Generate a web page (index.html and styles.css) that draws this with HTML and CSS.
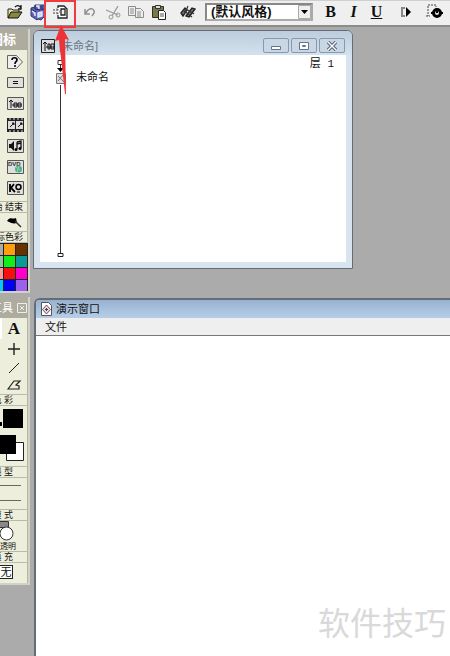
FILE: index.html
```html
<!DOCTYPE html>
<html lang="zh-CN">
<head>
<meta charset="utf-8">
<title>未命名</title>
<link rel="stylesheet" href="styles.css">
</head>
<body>
<header class="toolbar">
  <div class="tools">
    <button class="tool" aria-label="打开"><svg width="18" height="16" viewBox="0 0 18 16"><path d="M2 14V5h4l1 1h6v3" fill="#e8e5a0" stroke="#222"/><path d="M2 14l3-6h11l-4 6z" fill="#8a8640" stroke="#111"/><path d="M9 3c2-2 4-2 6 1M15 1v4h-3" fill="none" stroke="#111" stroke-width="1.3"/></svg></button>
    <button class="tool" aria-label="全部保存"><svg width="18" height="18" viewBox="0 0 18 18"><path d="M2 5l4-1V2h9l1 2v9l-4 4-3-1-1 1-6-4z" fill="#5b60b8" stroke="#333a70"/><path d="M6 2v4l5 1V3M2 6l5 3M13 3v4l3-2" stroke="#252b66" fill="none"/><path d="M7 3h3v3M3 8l3 2v3M9 10l4-1v4l-4 1z" stroke="#e4e8f5" stroke-width="1.4" fill="#c9cfee"/></svg></button>
    <button class="tool" aria-label="导入"><svg width="16" height="16" viewBox="0 0 16 16"><path d="M5 4V2h6l3 3v9H5v-3" fill="#fff" stroke="#222" stroke-width="1.3"/><path d="M8 5h4v6H8z" fill="#eee" stroke="#222" stroke-width="1.3"/><path d="M0 6h5M0 9h5M4 4.500l3 3-3 3" fill="none" stroke="#444" stroke-dasharray="2 1"/></svg></button>
  </div>
  <div class="tools">
    <button class="tool" aria-label="撤消"><svg width="16" height="16" viewBox="0 0 16 16"><path d="M3 5v5h5M3 10l3-4c4-3 7 0 6 3l-2 3" fill="none" stroke="#909090" stroke-width="1.5"/></svg></button>
    <button class="tool" aria-label="剪切"><svg width="16" height="16" viewBox="0 0 16 16"><path d="M1 6l12 5M13 2L7 12" fill="none" stroke="#999" stroke-width="1.3"/><circle cx="6" cy="13" r="2" fill="none" stroke="#999"/><circle cx="13" cy="11" r="2" fill="none" stroke="#999"/></svg></button>
    <button class="tool" aria-label="复制"><svg width="18" height="16" viewBox="0 0 18 16"><path d="M1.500 2.500h7v9h-7zM8.500 4.500h5l3 3v6h-8z" fill="#eee" stroke="#8c8c8c"/><path d="M3 5h4M3 7h4M3 9h4M10 8h4M10 10h4M10 12h4" stroke="#8c8c8c"/></svg></button>
    <button class="tool" aria-label="粘贴"><svg width="16" height="16" viewBox="0 0 16 16"><path d="M1.500 2.500h11v11h-11z" fill="#77784c" stroke="#34351f"/><path d="M4.500 1.500h5v3h-5z" fill="#ddd" stroke="#333"/><path d="M7.500 6.500h5l2 2v7h-7z" fill="#fff" stroke="#222"/><path d="M9 10h4M9 12h4" stroke="#555"/></svg></button>
  </div>
  <button class="tool" aria-label="查找"><svg width="18" height="16" viewBox="0 0 18 16"><path d="M2 9l4-5 2 2-4 6zM7 12l6-8 3 1-6 8z" fill="#777" stroke="#222" stroke-width="1.4"/><path d="M4 6l9 7M7 5l8 5M9 2l-2 5" stroke="#333" stroke-width="1.2"/></svg></button>
  <div class="style-picker">
    <select aria-label="文本风格"><option>(默认风格)</option></select>
    <svg class="picker-arrow" width="13" height="14" viewBox="0 0 13 14"><path d="M.5.5h12v13H.5z" fill="#efefef" stroke="#aaa"/><path d="M3 5h7l-3.500 4z" fill="#000"/></svg>
  </div>
  <div class="tools">
    <button class="tool letter bold">B</button>
    <button class="tool letter italic">I</button>
    <button class="tool letter underline">U</button>
  </div>
  <button class="tool" aria-label="控制面板"><svg width="14" height="14" viewBox="0 0 14 14"><path d="M6 3H3v8h3" fill="none" stroke="#888" stroke-width="2"/><path d="M7 2l5 5-5 5z" fill="#000"/></svg></button>
  <button class="tool" aria-label="函数"><svg width="18" height="18" viewBox="0 0 18 18"><path d="M2 2h8v2M2 3v10M0 13h4" fill="none" stroke="#444" stroke-dasharray="2 1"/><circle cx="11" cy="10" r="3.500" fill="#ddd" stroke="#000" stroke-width="3"/><path d="M11 7v3M5 10h2M15 10h2" stroke="#000" stroke-width="2"/></svg></button>
</header>

<div class="workspace">
  <aside class="palettes">
    <section class="palette">
      <h2 class="palette-title">图标</h2>
      <div class="icon-list">
        <button class="icon" aria-label="判断"><svg width="18" height="18" viewBox="0 0 18 18"><path d="M1.500 2.500h9l6 6.500-6 6.500h-9z" fill="#eee" stroke="#666"/><path d="M6 7c0-3 5-3 5 0 0 2-2 1-2 4M8 13h2" fill="none" stroke="#000" stroke-width="1.6"/></svg></button>
        <button class="icon" aria-label="计算"><svg width="17" height="12" viewBox="0 0 17 12"><path class="key" d="M.5.5h16v10H.5z"/><path d="M6 4.500h5M6 6.500h5" stroke="#111"/></svg></button>
        <button class="icon" aria-label="群组"><svg width="17" height="14" viewBox="0 0 17 14"><path class="key" d="M.5.5h16v12H.5z"/><path d="M4 11V3M2 5l2-2 2 2M5 8h10M7 6h3v4H7zM11 6h3v4h-3z" fill="none" stroke="#111"/></svg></button>
        <button class="icon" aria-label="电影"><svg width="17" height="14" viewBox="0 0 17 14"><path d="M0 0h17v14H0z" fill="#222"/><path d="M1 3h7v8H1zM9 3h7v8H9z" fill="#ddd"/><path d="M2 1h14M2 13h14" stroke="#ddd" stroke-dasharray="2 2"/><path d="M3 9l3-3M11 9l3-3M5 5h2v2M13 5h2v2" stroke="#111"/></svg></button>
        <button class="icon" aria-label="声音"><svg width="17" height="14" viewBox="0 0 17 14"><path class="key" d="M.5.5h16v13H.5z"/><path d="M2 5h2l3-3v10L4 9H2z" fill="#111"/><path d="M10 3v7M10 3l4-1v7M10 5l4-1" fill="none" stroke="#111" stroke-width="1.3"/><circle cx="9" cy="10.500" r="1.500"/><circle cx="13" cy="9.500" r="1.500"/></svg></button>
        <button class="icon" aria-label="DVD"><svg width="17" height="14" viewBox="0 0 17 14"><path class="key" d="M.5.5h16v13H.5z"/><text x="1" y="6" class="micro">DVD</text><circle cx="11.500" cy="9" r="3.500" fill="#47afa5"/><path d="M9 7l4 3M12 6l-2 6" stroke="#a4d36b"/></svg></button>
        <button class="icon" aria-label="知识对象"><svg width="17" height="14" viewBox="0 0 17 14"><path class="key" d="M.5.5h16v13H.5z"/><path d="M3 3v8M7 3L4 7l4 4" fill="none" stroke="#000" stroke-width="1.8"/><circle cx="11.500" cy="6" r="2.500" fill="none" stroke="#000" stroke-width="1.5"/><path d="M10 11h3" stroke="#000"/></svg></button>
      </div>
      <h3 class="label">开始 结束</h3>
      <div class="flag"><svg width="17" height="12" viewBox="0 0 17 12"><path d="M1 5c4-5 5-1 9-3l1 5c-4 1-6 0-10-2z" fill="#000"/><path d="M9 5l6 6" stroke="#333" stroke-width="1.5"/></svg></div>
      <h3 class="label">图标色彩</h3>
      <div class="swatches">
        <i class="gray"></i><i class="orange"></i><i class="brown"></i>
        <i class="mint"></i><i class="green"></i><i class="teal"></i>
        <i class="pink"></i><i class="red"></i><i class="magenta"></i>
        <i class="cyan"></i><i class="blue"></i><i class="violet"></i>
      </div>
    </section>

    <section class="palette toolbox">
      <h2 class="palette-title">工具<button class="palette-close" aria-label="关闭工具"><svg width="10" height="10" viewBox="0 0 10 10"><path d="M.5.5h9v9h-9zM3 3l4 4M7 3L3 7" fill="none" stroke="#eee"/></svg></button></h2>
      <div class="drawing-tools">
        <button class="draw selected" aria-label="选择"></button><button class="draw text-tool">A</button>
        <button class="draw" aria-label="矩形"></button><button class="draw" aria-label="直线"><svg width="14" height="14" viewBox="0 0 14 14"><path d="M7 1v12M1 7h12" stroke="#222" stroke-width="1.4"/></svg></button>
        <button class="draw" aria-label="椭圆"><svg width="14" height="14" viewBox="0 0 14 14"><circle cx="7" cy="7" r="4.500" fill="none" stroke="#222"/></svg></button><button class="draw" aria-label="斜线"><svg width="14" height="14" viewBox="0 0 14 14"><path d="M2 12L12 2" stroke="#222"/></svg></button>
        <button class="draw" aria-label="圆角矩形"></button><button class="draw" aria-label="多边形"><svg width="16" height="14" viewBox="0 0 16 14"><path d="M2 11l6-8h6l-4 4 3 1v3z" fill="none" stroke="#222" stroke-width="1.2"/></svg></button>
      </div>
      <h3 class="label">色 彩</h3>
      <div class="ink"><svg width="28" height="60" viewBox="0 0 28 60"><path d="M0 20v-4h2v4z"/><path d="M3 3h20v19H3z"/><path d="M6.500 36.500h17v18h-17z" fill="#fff" stroke="#222"/><path d="M0 29h16v19H0z"/></svg></div>
      <h3 class="label">线 型</h3>
      <div class="lines"></div>
      <h3 class="label">模 式</h3>
      <div class="mode"><svg width="28" height="21" viewBox="0 0 28 21"><path d="M-4 .5H8.500v6H-4z" fill="#888" stroke="#333"/><circle cx="6.500" cy="12.500" r="6.500" fill="#fff" stroke="#333"/></svg><span>透明</span></div>
      <h3 class="label">填 充</h3>
      <div class="fill"><button class="none">无</button></div>
    </section>
  </aside>

  <main class="desktop">
    <section class="window flow">
      <header class="titlebar">
        <svg width="14" height="14" viewBox="0 0 14 14"><path d="M.5.5h13v13H.5z" fill="#ddd" stroke="#222"/><path d="M4 12V3M2 5l2-2 2 2M5 8h8M7 5h2v5H7zM10 5h3v5h-3z" fill="none" stroke="#111"/></svg>
        <h1>[未命名]</h1>
        <div class="controls">
          <button aria-label="最小化"><svg width="12" height="10" viewBox="0 0 12 10"><path d="M1.500 5.500h9v3h-9z" fill="#fff" stroke="#64748a"/></svg></button>
          <button aria-label="最大化"><svg width="12" height="10" viewBox="0 0 12 10"><path d="M1.500 1.500h9v7h-9zM4.500 4.500h3v1h-3z" fill="#fff" stroke="#64748a"/></svg></button>
          <button aria-label="关闭"><svg width="12" height="10" viewBox="0 0 12 10"><path d="M2 1l8 8M10 1L2 9" stroke="#536176" stroke-width="3.400"/><path d="M2 1l8 8M10 1L2 9" stroke="#fff" stroke-width="1.400"/></svg></button>
        </div>
      </header>
      <div class="flow-body">
        <svg class="flow-line" width="12" height="203" viewBox="0 0 12 203"><path d="M4 3.500h5v4H4zM6.500 8v4M6.500 28v168" fill="none" stroke="#333"/><path d="M3 11h7l-3.500 4z"/><path d="M2.500 16.500h9v10h-9z" fill="#ddd" stroke="#777"/><path d="M4 19l6 6M9 18l-5 6" stroke="#777"/><path d="M4 196.500h5v3H4z" fill="#fff" stroke="#222"/></svg>
        <span class="node-name">未命名</span>
        <span class="level">层 1</span>
      </div>
    </section>

    <section class="window presentation">
      <header class="titlebar">
        <svg width="12" height="14" viewBox="0 0 12 14"><path d="M1.500.5h7l3 3v10h-10z" fill="#fff" stroke="#555"/><path d="M6.500 3l4 4.500-4 4.500-4-4.500z" fill="#ddd" stroke="#864b53"/><path d="M5 7.500h3M6.500 6v3" stroke="#536"/></svg>
        <h1>演示窗口</h1>
      </header>
      <nav class="menu"><button>文件</button></nav>
      <div class="stage"><span class="brand">软件技巧</span></div>
    </section>
  </main>
</div>

<svg class="callout" width="36" height="96" viewBox="0 0 36 96" aria-hidden="true"><path d="M3 1v26h30V1z" fill="none" stroke="#ef3b40" stroke-width="2"/><path d="M19 25l8 15-4-1 1 55h-1L17 40l-4 1z" fill="#ee3338"/></svg>
</body>
</html>
```
FILE: styles.css
```css
* { box-sizing: border-box; }

body {
  margin: 0;
  min-height: 100vh;
  display: flex;
  flex-direction: column;
  background: #ababab;
  color: #111;
  font: 11px/14px "Liberation Sans", "Noto Sans CJK SC", sans-serif;
  overflow-x: hidden;
}

h1, h2, h3 { margin: 0; font-weight: normal; }

button {
  margin: 0;
  padding: 0;
  border: 0;
  background: none;
  color: inherit;
  font: inherit;
}

svg { display: block; flex: none; }

/* Toolbar */
.toolbar {
  display: flex;
  align-items: center;
  gap: 6px;
  height: 27px;
  padding: 0 3px 2px;
  background: #efefef;
  border-top: 1px solid #cfcfcf;
  border-bottom: 2px solid #8c8c8c;
}

.tools { display: flex; }

.tool {
  display: flex;
  flex: none;
  align-items: center;
  justify-content: center;
  width: 23px;
  height: 22px;
}

.letter { font: bold 16px/20px "Liberation Serif", serif; }
.italic { font-style: italic; }
.underline { text-decoration: underline; }

.style-picker {
  display: grid;
  flex: none;
  width: 108px;
  height: 18px;
  align-items: center;
  background: #fff;
  border: 2px solid #888;
  border-right-color: #aaa;
  border-bottom-color: #aaa;
}

.style-picker select {
  grid-area: 1 / 1;
  width: 100%;
  padding: 0 4px;
  appearance: none;
  border: 0;
  background: none;
  color: #111;
  font: bold 13px/14px "Liberation Sans", "Noto Sans CJK SC", sans-serif;
}

.picker-arrow {
  grid-area: 1 / 1;
  justify-self: end;
  pointer-events: none;
}

/* Palettes */
.workspace { display: flex; flex: 1; }

.palettes {
  display: flex;
  flex: none;
  flex-direction: column;
  gap: 4px;
  width: 30px;
  padding-top: 2px;
}

.palette {
  overflow: hidden;
  background: #edeedb;
  border-right: 2px solid #d3d3c5;
  border-bottom: 2px solid #d3d3c5;
  box-shadow: inset -1px 0 #b5b5a4;
}

.palette-title {
  display: flex;
  align-items: center;
  justify-content: flex-end;
  gap: 4px;
  height: 21px;
  padding-right: 12px;
  background: #aeac9e;
  color: #fff;
  font-size: 13px;
  font-weight: bold;
  white-space: nowrap;
}

.toolbox .palette-title {
  padding-right: 1px;
  font-size: 11px;
  font-weight: normal;
}

.icon-list {
  display: flex;
  flex-direction: column;
  align-items: flex-end;
  padding: 1px 4px 3px 0;
}

.icon {
  display: flex;
  align-items: center;
  justify-content: flex-end;
  height: 21px;
}

.key { fill: #e0e0db; stroke: #555; }
.micro { font: bold 6px "Liberation Sans", sans-serif; fill: #333; }

.label {
  display: flex;
  justify-content: flex-end;
  height: 12px;
  padding-right: 5px;
  border: solid #b9b9a8;
  border-width: 1px 0;
  font-size: 9px;
  line-height: 10px;
  white-space: nowrap;
}

.toolbox .label { padding-right: 15px; }

.flag {
  display: flex;
  align-items: center;
  justify-content: flex-end;
  height: 18px;
  padding-right: 5px;
}

.swatches {
  display: grid;
  grid-template-columns: 12px 12px 12px;
  grid-auto-rows: 12px;
  justify-content: end;
}

.swatches i { border: solid #222; border-width: 1px 1px 0 0; }
.gray { background: #aaa; }
.orange { background: #ff9e0c; }
.brown { background: #663300; }
.mint { background: #8ec69a; }
.green { background: #11ef19; }
.teal { background: #0b9a98; }
.pink { background: #ff9999; }
.red { background: #f51010; }
.magenta { background: #ff00c8; }
.cyan { background: #00c8ff; }
.blue { background: #0000f5; }
.violet { background: #9c60ef; }

.drawing-tools {
  display: grid;
  grid-template-columns: 24px 24px;
  grid-template-rows: 21px 20px 17px 18px;
  justify-content: end;
  padding-right: 2px;
}

.draw {
  display: flex;
  align-items: center;
  justify-content: center;
}

.selected { background: #fff; }
.text-tool { font: bold 17px/20px "Liberation Serif", serif; }

.ink { height: 60px; }

.lines {
  height: 31px;
  margin-right: 7px;
  background: linear-gradient(#6e695c, #6e695c) 0 7px / 100% 1px no-repeat,
    linear-gradient(#6e695c, #6e695c) 0 22px / 100% 1px no-repeat;
}

.mode { display: flex; flex-direction: column; height: 30px; }

.mode span {
  align-self: flex-end;
  padding-right: 12px;
  font-size: 8px;
  line-height: 9px;
  white-space: nowrap;
}

.fill { height: 20px; padding-top: 2px; }

.none {
  width: 13px;
  height: 14px;
  background: #fff;
  border: 1px solid #222;
  border-left: 0;
  line-height: 12px;
}

/* Windows */
.desktop {
  display: flex;
  flex: 1;
  flex-direction: column;
  gap: 29px;
  min-width: 0;
  padding: 3px 0 0 3px;
}

.window { border: 1px solid #626d78; }

.titlebar {
  display: flex;
  align-items: center;
  gap: 4px;
}

.titlebar h1 { font-size: 11px; line-height: 16px; }

.flow {
  width: 320px;
  padding: 0 6px 6px;
  background: #d8e4f0;
  border-radius: 6px 6px 0 0;
}

.flow .titlebar {
  height: 24px;
  margin: 0 -6px;
  padding: 5px 7px 0;
  border-radius: 5px 5px 0 0;
  background: linear-gradient(#bdcddd, #d4e1ee);
}

.flow h1 { color: #6a7480; }

.controls { display: flex; gap: 2px; margin-left: auto; }

.controls button {
  display: flex;
  align-items: center;
  justify-content: center;
  width: 26px;
  height: 15px;
  border: 1px solid #8999ac;
  border-radius: 2px;
  background: #c9d6e4;
}

.flow-body {
  display: flex;
  gap: 10px;
  height: 207px;
  padding: 2px 12px 2px 14px;
  background: #fff;
}

.node-name { padding-top: 13px; }
.level { margin-left: auto; font-family: "Liberation Mono", "Noto Sans CJK SC", monospace; }

.presentation {
  display: flex;
  flex: 1;
  flex-direction: column;
  margin-left: 1px;
  border-width: 2px 0 0 2px;
  border-radius: 6px 0 0 0;
  background: #fff;
}

.presentation .titlebar {
  height: 18px;
  padding-left: 4px;
  border-radius: 4px 0 0 0;
  background: linear-gradient(#97b2d0, #b7cee8);
}

.menu {
  display: flex;
  height: 18px;
  padding-left: 9px;
  background: #efefef;
  border-bottom: 1px solid #777;
}

.stage {
  display: flex;
  flex: 1;
  align-items: flex-end;
  justify-content: flex-end;
  padding: 0 4px 12px 0;
}

.brand {
  color: #d9d9d9;
  font: 400 32px/46px "Noto Sans CJK SC", sans-serif;
}

/* Import highlight over the toolbar and flow window */
.callout {
  position: absolute;
  top: 0;
  left: 42px;
  pointer-events: none;
}
```
